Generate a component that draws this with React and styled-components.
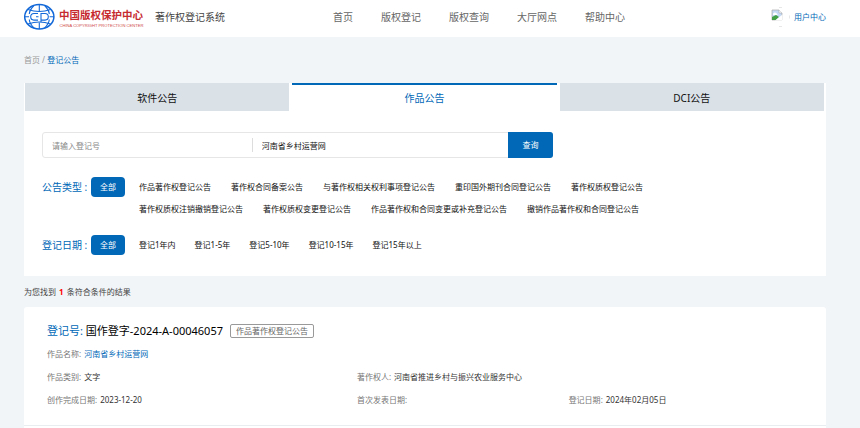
import { useState } from 'react';
import styled, { createGlobalStyle } from 'styled-components';

const GlobalStyle = createGlobalStyle`
    * {
        box-sizing: border-box;
    }
    body {
        margin: 0;
        background: #f1f5f8;
        color: #333;
        font-family: "Noto Sans", "Noto Sans CJK SC", sans-serif;
        font-size: 8px;
        line-height: 12px;
    }
    a {
        color: inherit;
        text-decoration: none;
    }
    button, input {
        font: inherit;
        border: 0;
        padding: 0;
        background: none;
    }
    h2, dl, dd, p {
        margin: 0;
    }
`

const Header = styled.header`
    display: grid;
    grid-template-columns: 309px 1fr auto;
    align-items: center;
    height: 37px;
    padding: 0 34px 4px 24px;
    background: #fff;
`

const Brand = styled.a`
    display: flex;
    align-items: center;
    gap: 11px;
    color: #444;
    font-size: 10px;
`

const Nav = styled.nav`
    display: flex;
    gap: 28px;
    color: #666;
    font-size: 10px;
`

const UserLink = styled.a`
    display: flex;
    align-items: center;
    gap: 4px;
    color: #0068b7;
`

const Main = styled.main`
    padding: 17px 34px 0 24px;
`

const Breadcrumb = styled.nav`
    margin-bottom: 17px;
    color: #999;
    & > [aria-current] {
        color: #0068b7;
    }
`

const Panel = styled.section`
    background: #fff;
    padding-bottom: 5px;
`

const TabList = styled.div`
    display: grid;
    grid-template-columns: repeat(3, 1fr);
    gap: 3px;
    padding: 0 2px 0 1px;
`

const Tab = styled.button`
    height: 28px;
    border-top: 2px solid ${props => props.$active ? '#0068b7' : '#dae1e7'};
    background: ${props => props.$active ? '#fff' : '#dae1e7'};
    color: ${props => props.$active ? '#0068b7' : '#111'};
    font-size: 10px;
    cursor: pointer;
`

const SearchForm = styled.form`
    display: flex;
    align-items: center;
    max-width: 511px;
    height: 26px;
    margin: 21px 18px 19px;
    border: 1px solid #e6e6e6;
    border-radius: 3px;
`

const SearchInput = styled.input`
    flex: ${props => props.$grow} 1 0;
    min-width: 0;
    height: 14px;
    padding: 0 9px;
    color: #111;
    outline: 0;
    & + & {
        border-left: 1px solid #ddd;
    }
    &::placeholder {
        color: #888;
    }
`

const SearchButton = styled.button`
    width: 45px;
    height: 26px;
    margin: -1px;
    border-radius: 0 3px 3px 0;
    background: #0068b7;
    color: #fff;
    cursor: pointer;
`

const FilterRow = styled.div`
    display: flex;
    align-items: flex-start;
    margin: 0 18px 16px;
`

const FilterLabel = styled.span`
    width: 49px;
    color: #0068b7;
    font-size: 10px;
    line-height: 20px;
`

const AllButton = styled.button`
    width: 34px;
    height: 20px;
    margin-right: 14px;
    border-radius: 4px;
    background: #0068b7;
    color: #fff;
    cursor: pointer;
`

const Options = styled.div`
    flex: 1;
    max-width: 540px;
    display: flex;
    flex-wrap: wrap;
    gap: 2px ${props => props.$gap}px;
`

const Option = styled.button`
    height: 20px;
    color: #111;
    cursor: pointer;
`

const ResultCount = styled.p`
    margin: 10px 0 9px;
    color: #444;
    & > b {
        margin: 0 1px;
        color: #f00;
    }
`

const Card = styled.article`
    padding: 17px 23px 19px;
    border-bottom: 1px solid #e9edf0;
    border-radius: 3px 3px 0 0;
    background: #fff;
`

const NextCard = styled.div`
    height: 8px;
    background: #fff;
`

const CardTitle = styled.div`
    display: flex;
    align-items: center;
    gap: 7px;
    margin-bottom: 10px;
    & > h2 {
        color: #000;
        font-size: 11px;
        font-weight: 400;
        line-height: 14px;
    }
    & > h2 > span {
        color: #0068b7;
    }
`

const Tag = styled.span`
    padding: 0 5px;
    border: 1px solid #999;
    border-radius: 2px;
    color: #666;
`

const Details = styled.dl`
    display: grid;
    grid-template-columns: 41fr 28fr 31fr;
    row-gap: 11px;
`

const Detail = styled.div`
    display: flex;
    gap: 3px;
    grid-column: ${props => props.$column};
    & > dt {
        color: #777;
    }
    & > dd {
        color: ${props => props.$link ? '#0068b7' : '#333'};
    }
`

const tabs = ['软件公告', '作品公告', 'DCI公告'];

const noticeTypes = [
    '作品著作权登记公告',
    '著作权合同备案公告',
    '与著作权相关权利事项登记公告',
    '重印国外期刊合同登记公告',
    '著作权质权登记公告',
    '著作权质权注销撤销登记公告',
    '著作权质权变更登记公告',
    '作品著作权和合同变更或补充登记公告',
    '撤销作品著作权和合同登记公告'
];

const dateRanges = ['登记1年内', '登记1-5年', '登记5-10年', '登记10-15年', '登记15年以上'];

function Logo () {
    return (
        <svg width="120" height="28" viewBox="0 0 120 28" role="img" aria-label="中国版权保护中心">
            <g fill="none" stroke="#1268d8" strokeWidth="1.1">
                <ellipse cx="15.3" cy="13.8" rx="14.6" ry="12.2" strokeWidth="1.5" />
                <path d="M15.3 1.600V8M15.3 19.500V26M.7 13.800H5M25.600 13.800H30" />
                <path d="M10 2.500Q5.500 7 5.300 11M20.600 2.500Q25 7 25.300 11M10 25Q5.500 20.500 5.300 16.500M20.600 25Q25 20.500 25.300 16.500" />
                <path d="M4 6.500Q15.3 10.500 26.600 6.500M4 21Q15.3 17 26.600 21" />
                <path d="M14 10.500H10a3.300 3.300 0 0 0 0 6.600h4M12 13.800h2.500M17 19V10.500h4a3.300 3.300 0 0 1 0 6.600h-4" />
            </g>
            <text x="35" y="15.5" fill="#c62a2f" fontSize="10.5" fontWeight="600">中国版权保护中心</text>
            <text x="35.5" y="23.5" fill="#d04a4a" fontSize="4.1" fontFamily="Liberation Sans, sans-serif">CHINA COPYRIGHT PROTECTION CENTER</text>
        </svg>
    );
}

function Avatar () {
    return (
        <svg width="20" height="20" viewBox="0 0 20 20" aria-hidden="true">
            <path d="M9 .5h3M9 19.500h3M19.500 8.500v3" stroke="#ddd" strokeWidth=".7" />
            <path d="M2 3h7l3 3v7H2z" fill="#c3d9f5" stroke="#aaa" strokeWidth=".7" />
            <path d="M3 8a2 2 0 0 1 4-1l1 1z" fill="#fff" />
            <path d="M2 13v-3l4-2 3 2-3 3z" fill="#43a047" />
            <path d="M5 13.500l7.500-6v6z" fill="#fff" />
            <path d="M9 3v3h3" fill="#fff" stroke="#aaa" strokeWidth=".6" />
        </svg>
    );
}

function Filter (props) {
    return (
        <FilterRow role="group" aria-label={props.label}>
            <FilterLabel>{props.label} :</FilterLabel>
            <AllButton type="button">全部</AllButton>
            <Options $gap={props.gap}>
                {props.options.map(option => <Option type="button" key={option}>{option}</Option>)}
            </Options>
        </FilterRow>
    );
}

function Field (props) {
    return (
        <Detail $column={props.column} $link={props.link}>
            <dt>{props.label}:</dt>
            <dd>{props.link ? <a href="#work">{props.children}</a> : props.children}</dd>
        </Detail>
    );
}

function App () {
    const [active, setActive] = useState(1);
    const [name, setName] = useState('河南省乡村运营网');

    return (
        <>
            <GlobalStyle />
            <Header>
                <Brand href="#home"><Logo />著作权登记系统</Brand>
                <Nav>
                    <a href="#home">首页</a>
                    <a href="#register">版权登记</a>
                    <a href="#query">版权查询</a>
                    <a href="#offices">大厅网点</a>
                    <a href="#help">帮助中心</a>
                </Nav>
                <UserLink href="#user"><Avatar />用户中心</UserLink>
            </Header>
            <Main>
                <Breadcrumb>
                    <a href="#home">首页</a> / <a href="#notices" aria-current="page">登记公告</a>
                </Breadcrumb>
                <Panel>
                    <TabList role="tablist">
                        {tabs.map((tab, i) => (
                            <Tab
                                key={tab}
                                type="button"
                                role="tab"
                                aria-selected={i === active}
                                $active={i === active}
                                onClick={() => setActive(i)}
                            >{tab}</Tab>
                        ))}
                    </TabList>
                    <SearchForm onSubmit={e => e.preventDefault()}>
                        <SearchInput $grow={4} aria-label="登记号" placeholder="请输入登记号" />
                        <SearchInput $grow={5} aria-label="作品名称" value={name} onChange={e => setName(e.target.value)} />
                        <SearchButton type="submit">查询</SearchButton>
                    </SearchForm>
                    <Filter label="公告类型" options={noticeTypes} gap={20} />
                    <Filter label="登记日期" options={dateRanges} gap={19} />
                </Panel>
                <ResultCount>为您找到 <b>1</b> 条符合条件的结果</ResultCount>
                <Card>
                    <CardTitle>
                        <h2><span>登记号:</span> 国作登字-2024-A-00046057</h2>
                        <Tag>作品著作权登记公告</Tag>
                    </CardTitle>
                    <Details>
                        <Field label="作品名称" column="1 / -1" link>河南省乡村运营网</Field>
                        <Field label="作品类别" column="1">文字</Field>
                        <Field label="著作权人" column="2 / -1">河南省推进乡村与振兴农业服务中心</Field>
                        <Field label="创作完成日期" column="1">2023-12-20</Field>
                        <Field label="首次发表日期" column="2" />
                        <Field label="登记日期" column="3">2024年02月05日</Field>
                    </Details>
                </Card>
                <NextCard />
            </Main>
        </>
    );
}

export default App;
